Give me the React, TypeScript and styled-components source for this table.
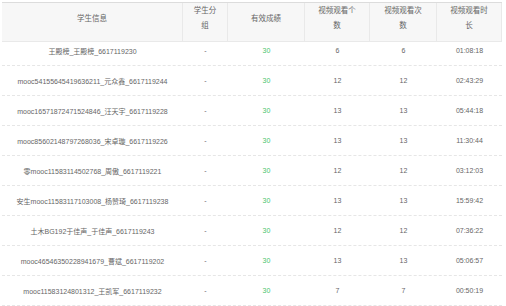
import React from "react";
import styled, { createGlobalStyle } from "styled-components";

const Global = createGlobalStyle`
  html, body { margin: 0; padding: 0; background: #fff; }
  body { font-family: "Liberation Sans", "Noto Sans CJK SC", sans-serif; }
`;

const cols = "181px 45px 77px 65px 67px 65px";

const Table = styled.div`
  margin: 2px 0 0 2px;
  width: 500px;
  border-top: 1px solid #dcdcdc;
`;

const HeadRow = styled.div`
  display: grid;
  grid-template-columns: ${cols};
  height: 33px;
`;

const HeadCell = styled.div`
  background: #f7f7f7;
  border-right: 1px solid #e9e9e9;
  border-bottom: 1px solid #e9e9e9;
  display: flex;
  align-items: center;
  justify-content: center;
  padding-bottom: 8px;
  box-sizing: border-box;
  color: #666;
  font-size: 7.5px;
  line-height: 15px;
  text-align: center;
  white-space: pre-line;
`;

const Row = styled.div`
  display: grid;
  grid-template-columns: ${cols};
  height: 30px;
  box-sizing: border-box;
  border-bottom: 1px dashed #e6e6e6;
`;

const Cell = styled.div<{ $green?: boolean }>`
  display: flex;
  align-items: center;
  justify-content: center;
  font-size: 7px;
  color: ${(p) => (p.$green ? "#4cc46c" : "#666")};
  white-space: nowrap;
`;

const headers = ["学生信息", "学生分\n组", "有效成绩", "视频观看个\n数", "视频观看次\n数", "视频观看时\n长"];

const rows: [string, number, number, string][] = [
  ["王殿榜_王殿榜_6617119230", 6, 6, "01:08:18"],
  ["mooc54155645419636211_元众鑫_6617119244", 12, 12, "02:43:29"],
  ["mooc16571872471524846_汪天宇_6617119228", 13, 13, "05:44:18"],
  ["mooc85602148797268036_宋卓璇_6617119226", 13, 13, "11:30:44"],
  ["零mooc11583114502768_周傲_6617119221", 12, 12, "03:12:03"],
  ["安生mooc11583117103008_杨赞琦_6617119238", 13, 13, "15:59:42"],
  ["土木BG192于佳声_于佳声_6617119243", 12, 12, "07:36:22"],
  ["mooc46546350228941679_曹斌_6617119202", 13, 13, "05:06:57"],
  ["mooc11583124801312_王凯军_6617119232", 7, 7, "00:50:19"],
];

export default function App() {
  return (
    <>
      <Global />
      <Table>
        <HeadRow>
          {headers.map((h) => (
            <HeadCell key={h}>{h}</HeadCell>
          ))}
        </HeadRow>
        {rows.map((r) => (
          <Row key={r[0]}>
            <Cell>{r[0]}</Cell>
            <Cell>-</Cell>
            <Cell $green>30</Cell>
            <Cell>{r[1]}</Cell>
            <Cell>{r[2]}</Cell>
            <Cell>{r[3]}</Cell>
          </Row>
        ))}
      </Table>
    </>
  );
}
